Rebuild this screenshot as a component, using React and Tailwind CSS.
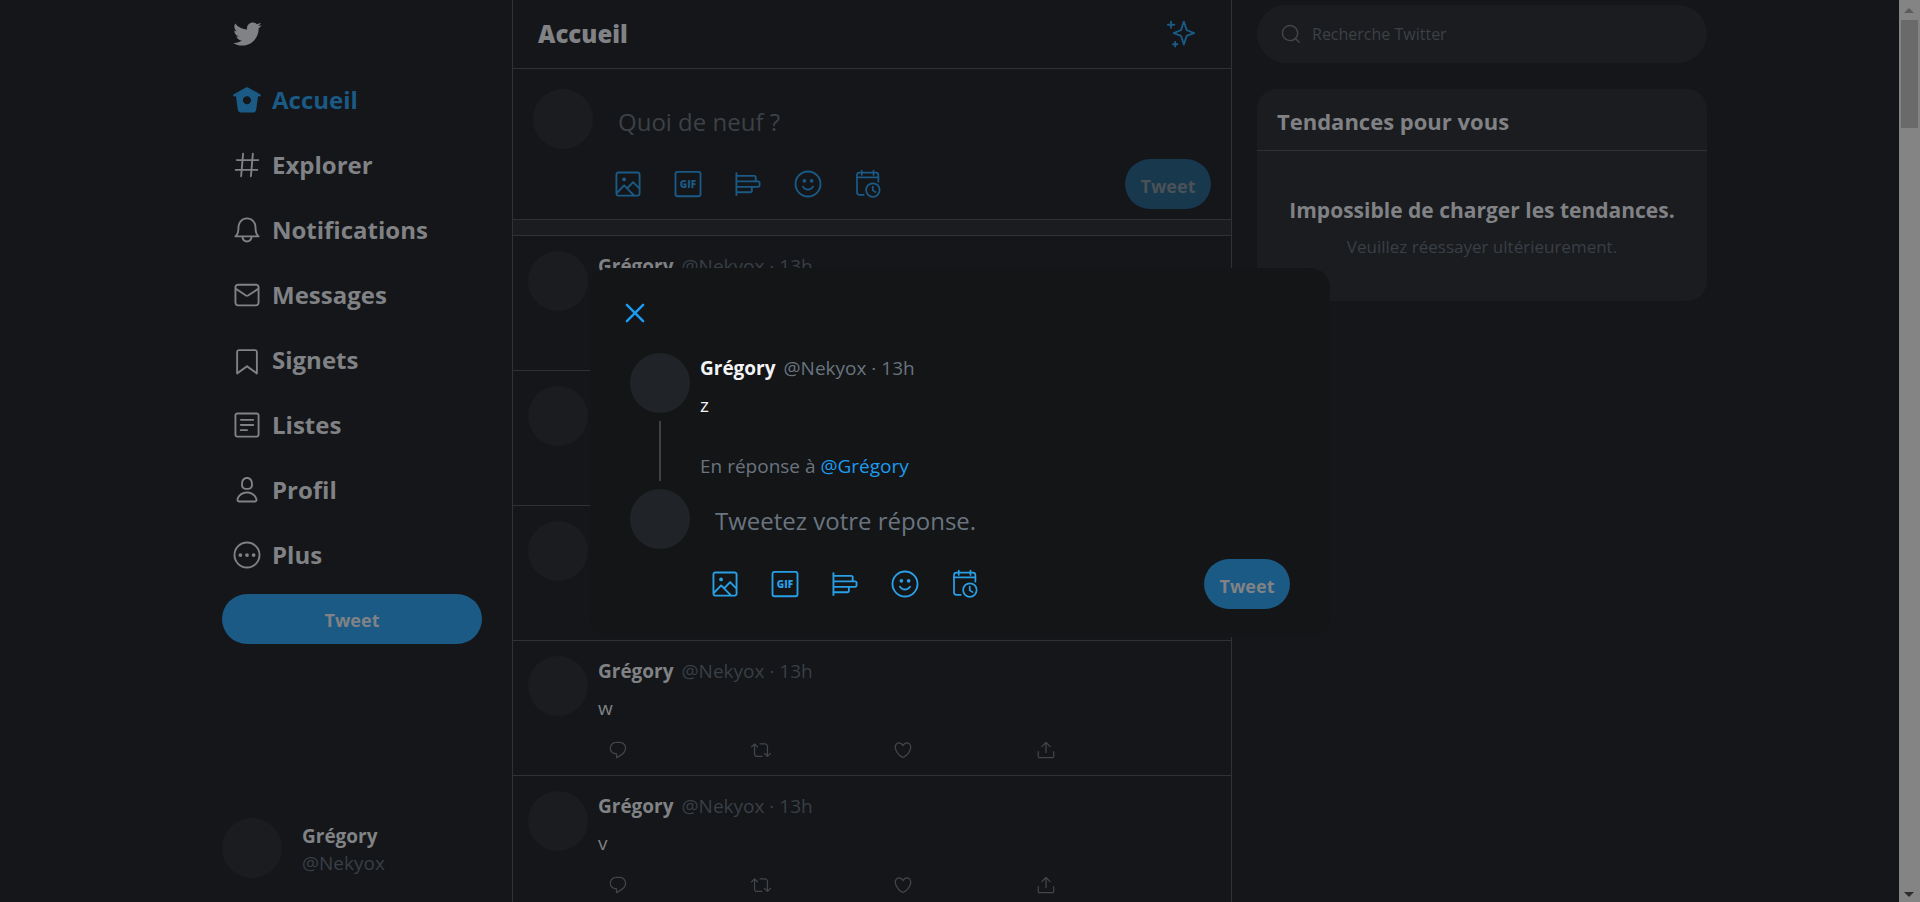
const PATHS = {
  bird: 'M23.643 4.937c-.835.37-1.732.62-2.675.733.962-.576 1.7-1.49 2.048-2.578-.9.534-1.897.922-2.958 1.13-.85-.904-2.06-1.47-3.4-1.47-2.572 0-4.658 2.086-4.658 4.66 0 .364.042.718.12 1.06-3.873-.195-7.304-2.05-9.602-4.868-.4.69-.63 1.49-.63 2.342 0 1.616.823 3.043 2.072 3.878-.764-.025-1.482-.234-2.11-.583v.06c0 2.257 1.605 4.14 3.737 4.568-.392.106-.803.162-1.227.162-.3 0-.593-.028-.877-.082.593 1.85 2.313 3.198 4.352 3.234-1.595 1.25-3.604 1.995-5.786 1.995-.376 0-.747-.022-1.112-.065 2.062 1.323 4.51 2.093 7.14 2.093 8.57 0 13.255-7.098 13.255-13.254 0-.2-.005-.402-.014-.602.91-.658 1.7-1.477 2.323-2.41z',
  home: 'M22.58 7.35L12.475 1.897c-.297-.16-.654-.16-.95 0L1.425 7.35c-.486.264-.667.87-.405 1.356.18.335.525.525.88.525.16 0 .324-.038.475-.12l.734-.396 1.59 11.25c.216 1.214 1.31 2.062 2.66 2.062h9.282c1.35 0 2.444-.848 2.662-2.088l1.588-11.225.737.398c.485.263 1.092.082 1.354-.404.263-.486.08-1.093-.404-1.355zM12 15.435c-1.795 0-3.25-1.455-3.25-3.25s1.455-3.25 3.25-3.25 3.25 1.455 3.25 3.25-1.455 3.25-3.25 3.25z',
  hash: 'M21 7.337h-3.93l.372-4.272c.036-.412-.27-.775-.682-.812-.417-.03-.776.27-.812.683l-.383 4.4h-6.32l.37-4.27c.037-.413-.27-.776-.68-.813-.42-.03-.777.27-.813.683l-.382 4.4H3.782c-.414 0-.75.337-.75.75s.336.75.75.75H7.61l-.55 6.327H3c-.414 0-.75.336-.75.75s.336.75.75.75h3.93l-.372 4.272c-.036.412.27.775.682.812l.066.003c.385 0 .712-.295.746-.686l.383-4.4h6.32l-.37 4.27c-.036.413.27.776.682.813l.066.003c.385 0 .712-.295.746-.686l.382-4.4h3.957c.413 0 .75-.337.75-.75s-.337-.75-.75-.75H16.39l.55-6.327H21c.414 0 .75-.336.75-.75s-.336-.75-.75-.75zm-6.115 7.826h-6.32l.55-6.326h6.32l-.55 6.326z',
  bell: 'M21.697 16.468c-.02-.016-2.14-1.64-2.103-6.03.02-2.532-.812-4.782-2.347-6.335C15.872 2.71 14.01 1.94 12.005 1.93h-.013c-2.004.01-3.866.78-5.242 2.174-1.534 1.553-2.368 3.802-2.346 6.334.037 4.33-2.02 5.967-2.102 6.03-.26.193-.366.53-.265.838.102.308.39.515.712.515h4.92c.102 2.31 1.997 4.16 4.33 4.16s4.226-1.85 4.327-4.16h4.922c.322 0 .61-.206.71-.514.103-.307-.003-.645-.263-.838zM12 20.478c-1.505 0-2.73-1.177-2.828-2.658h5.656c-.1 1.48-1.323 2.66-2.828 2.66zM4.38 16.32c.74-1.132 1.548-3.028 1.524-5.896-.018-2.16.644-3.982 1.913-5.267C8.91 4.05 10.397 3.437 12 3.43c1.603.008 3.087.62 4.18 1.728 1.27 1.285 1.933 3.106 1.915 5.267-.024 2.868.785 4.765 1.525 5.896H4.38z',
  mail: 'M19.25 3.018H4.75C3.233 3.018 2 4.252 2 5.77v12.495c0 1.518 1.233 2.753 2.75 2.753h14.5c1.517 0 2.75-1.235 2.75-2.753V5.77c0-1.518-1.233-2.752-2.75-2.752zm-14.5 1.5h14.5c.69 0 1.25.56 1.25 1.25v.714l-8.05 5.367c-.273.18-.626.182-.9-.002L3.5 6.482v-.714c0-.69.56-1.25 1.25-1.25zm14.5 14.998H4.75c-.69 0-1.25-.56-1.25-1.25V8.24l7.24 4.83c.383.256.822.384 1.26.384.44 0 .877-.128 1.26-.383l7.24-4.83v10.022c0 .69-.56 1.25-1.25 1.25z',
  bookmark: 'M19.9 23.5c-.157 0-.312-.05-.442-.144L12 17.928l-7.458 5.43c-.228.164-.53.19-.782.06-.25-.127-.41-.385-.41-.667V5.6c0-1.24 1.01-2.25 2.25-2.25h12.798c1.24 0 2.25 1.01 2.25 2.25v17.15c0 .282-.158.54-.41.668-.106.055-.223.082-.34.082zM12 16.25c.155 0 .31.048.44.144l6.71 4.883V5.6c0-.412-.337-.75-.75-.75H5.6c-.413 0-.75.338-.75.75v15.677l6.71-4.883c.13-.096.285-.144.44-.144z',
  list: 'M19.75 22H4.25C3.01 22 2 20.99 2 19.75V4.25C2 3.01 3.01 2 4.25 2h15.5C20.99 2 22 3.01 22 4.25v15.5c0 1.24-1.01 2.25-2.25 2.25zM4.25 3.5c-.414 0-.75.337-.75.75v15.5c0 .413.336.75.75.75h15.5c.414 0 .75-.337.75-.75V4.25c0-.413-.336-.75-.75-.75H4.25zM17 8.64H7c-.414 0-.75-.337-.75-.75s.336-.75.75-.75h10c.414 0 .75.335.75.75s-.336.75-.75.75zm0 4.11H7c-.414 0-.75-.336-.75-.75s.336-.75.75-.75h10c.414 0 .75.336.75.75s-.336.75-.75.75zm-5 4.11H7c-.414 0-.75-.335-.75-.75s.336-.75.75-.75h5c.414 0 .75.337.75.75s-.336.75-.75.75z',
  profile: 'M12 11.816c1.355 0 2.872-.15 3.84-1.256.814-.93 1.078-2.368.806-4.392-.38-2.825-2.117-4.512-4.646-4.512S7.734 3.343 7.354 6.17c-.272 2.022-.008 3.46.806 4.39.968 1.107 2.485 1.256 3.84 1.256zM8.84 6.368c.162-1.2.787-3.212 3.16-3.212s2.998 2.013 3.16 3.212c.207 1.55.057 2.627-.45 3.205-.455.52-1.266.743-2.71.743s-2.255-.223-2.71-.743c-.507-.578-.657-1.656-.45-3.205zm11.44 12.868c-.877-3.526-4.282-5.99-8.28-5.99s-7.403 2.464-8.28 5.99c-.172.692-.028 1.4.395 1.94.408.52 1.04.82 1.733.82h12.304c.693 0 1.325-.3 1.733-.82.424-.54.567-1.247.394-1.94zm-1.576 1.016c-.126.16-.316.246-.552.246H5.848c-.235 0-.426-.085-.552-.246-.137-.174-.18-.412-.12-.654.71-2.855 3.517-4.85 6.824-4.85s6.114 1.994 6.824 4.85c.06.242.017.48-.12.654z',
  reply: 'M14.046 2.242l-4.148-.01h-.002c-4.374 0-7.8 3.427-7.8 7.802 0 4.098 3.186 7.206 7.465 7.37v3.828c0 .108.044.286.12.403.142.225.384.347.632.347.138 0 .277-.038.402-.118.264-.168 6.473-4.14 8.088-5.506 1.902-1.61 3.04-3.97 3.043-6.312v-.017c-.006-4.367-3.43-7.787-7.8-7.788zm3.787 12.972c-1.134.96-4.862 3.405-6.772 4.643V16.67c0-.414-.335-.75-.75-.75h-.396c-3.66 0-6.318-2.476-6.318-5.886 0-3.534 2.768-6.302 6.3-6.302l4.147.01h.002c3.532 0 6.3 2.766 6.302 6.296-.003 1.91-.942 3.844-2.514 5.176z',
  retweet: 'M23.77 15.67c-.292-.293-.767-.293-1.06 0l-2.22 2.22V7.65c0-2.068-1.683-3.75-3.75-3.75h-5.85c-.414 0-.75.336-.75.75s.336.75.75.75h5.85c1.24 0 2.25 1.01 2.25 2.25v10.24l-2.22-2.22c-.293-.293-.768-.293-1.06 0s-.294.768 0 1.06l3.5 3.5c.145.147.337.22.53.22s.383-.072.53-.22l3.5-3.5c.294-.292.294-.767 0-1.06zm-10.66 3.28H7.26c-1.24 0-2.25-1.01-2.25-2.25V6.46l2.22 2.22c.148.147.34.22.532.22s.384-.073.53-.22c.293-.293.293-.768 0-1.06l-3.5-3.5c-.293-.294-.768-.294-1.06 0l-3.5 3.5c-.294.292-.294.767 0 1.06s.767.293 1.06 0l2.22-2.22V16.7c0 2.068 1.683 3.75 3.75 3.75h5.85c.414 0 .75-.336.75-.75s-.337-.75-.75-.75z',
  like: 'M12 21.638h-.014C9.403 21.59 1.95 14.856 1.95 8.478c0-3.064 2.525-5.754 5.403-5.754 2.29 0 3.83 1.58 4.646 2.73.814-1.148 2.354-2.73 4.645-2.73 2.88 0 5.404 2.69 5.404 5.755 0 6.376-7.454 13.11-10.037 13.157H12zM7.354 4.225c-2.08 0-3.903 1.988-3.903 4.255 0 5.74 7.034 11.596 8.55 11.658 1.518-.062 8.55-5.917 8.55-11.658 0-2.267-1.823-4.255-3.903-4.255-2.528 0-3.94 2.936-3.952 2.965-.23.562-1.156.562-1.387 0-.014-.03-1.425-2.965-3.954-2.965z',
  share: 'M17.53 7.47l-5-5c-.293-.293-.768-.293-1.06 0l-5 5c-.294.293-.294.768 0 1.06s.767.294 1.06 0l3.72-3.72V15c0 .414.336.75.75.75s.75-.336.75-.75V4.81l3.72 3.72c.146.147.338.22.53.22s.384-.072.53-.22c.293-.293.293-.767 0-1.06zM19.708 21.944H4.292C3.028 21.944 2 20.916 2 19.652V14c0-.414.336-.75.75-.75s.75.336.75.75v5.652c0 .437.355.792.792.792h15.416c.437 0 .792-.355.792-.792V14c0-.414.336-.75.75-.75s.75.336.75.75v5.652c0 1.264-1.028 2.292-2.292 2.292z',
  sparkle: 'M22.772 10.506l-5.618-2.192-2.16-6.5c-.102-.307-.39-.514-.712-.514s-.61.207-.712.513l-2.16 6.5-5.62 2.192c-.287.112-.477.39-.477.7s.19.585.478.698l5.62 2.192 2.16 6.5c.102.306.39.513.712.513s.61-.207.712-.513l2.16-6.5 5.62-2.192c.287-.112.477-.39.477-.7s-.19-.585-.478-.697zm-6.49 2.32c-.208.08-.37.25-.44.46l-1.56 4.695-1.56-4.693c-.07-.21-.23-.38-.438-.462l-4.155-1.62 4.154-1.622c.208-.08.37-.25.44-.462l1.56-4.693 1.56 4.694c.07.212.23.382.438.463l4.155 1.62-4.155 1.622zM6.663 3.812h-1.88V2.05c0-.414-.337-.75-.75-.75s-.75.336-.75.75v1.762H1.5c-.414 0-.75.336-.75.75s.336.75.75.75h1.782v1.762c0 .414.336.75.75.75s.75-.336.75-.75V5.312h1.88c.415 0 .75-.336.75-.75s-.335-.75-.75-.75zm2.535 15.622h-1.1v-1.016c0-.414-.335-.75-.75-.75s-.75.336-.75.75v1.016H5.57c-.414 0-.75.336-.75.75s.336.75.75.75H6.6v1.016c0 .414.335.75.75.75s.75-.336.75-.75v-1.016h1.098c.414 0 .75-.336.75-.75s-.336-.75-.75-.75z',
  image: 'M19.75 2H4.25C3.01 2 2 3.01 2 4.25v15.5C2 20.99 3.01 22 4.25 22h15.5c1.24 0 2.25-1.01 2.25-2.25V4.25C22 3.01 20.99 2 19.75 2zM4.25 3.5h15.5c.413 0 .75.337.75.75v9.676l-3.858-3.858c-.14-.14-.33-.22-.53-.22h-.003c-.2 0-.393.08-.532.224l-4.317 4.384-1.813-1.806c-.14-.14-.33-.22-.53-.22-.193-.03-.395.08-.535.227L3.5 17.642V4.25c0-.413.337-.75.75-.75zm-.744 16.28l5.418-5.534 6.282 6.254H4.25c-.402 0-.727-.322-.744-.72zm16.244.72h-2.42l-5.007-4.987 3.792-3.85 4.385 4.384v3.703c0 .413-.337.75-.75.75z',
  poll: 'M20.222 9.16h-1.334c.015-.09.028-.182.028-.277V6.57c0-.98-.797-1.777-1.778-1.777H3.5V3.358c0-.414-.336-.75-.75-.75s-.75.336-.75.75V20.83c0 .415.336.75.75.75s.75-.335.75-.75v-1.434h10.556c.98 0 1.778-.797 1.778-1.777v-2.313c0-.095-.014-.187-.028-.278h4.417c.98 0 1.778-.798 1.778-1.778v-2.31c0-.983-.797-1.78-1.778-1.78zM17.14 6.293c.152 0 .277.124.277.277v2.31c0 .154-.125.28-.278.28H3.5V6.29h13.64zm-2.807 9.014v2.312c0 .153-.125.277-.278.277H3.5v-2.868h10.556c.153 0 .277.126.277.28zM20.5 13.25c0 .153-.125.277-.278.277H3.5V10.66h16.722c.153 0 .278.124.278.277v2.313z',
  search: 'M21.53 20.47l-3.66-3.66C19.195 15.24 20 13.214 20 11c0-4.97-4.03-9-9-9s-9 4.03-9 9 4.03 9 9 9c2.215 0 4.24-.804 5.808-2.13l3.66 3.66c.147.146.34.22.53.22s.385-.073.53-.22c.295-.293.295-.767.002-1.06zM3.5 11c0-4.135 3.365-7.5 7.5-7.5s7.5 3.365 7.5 7.5-3.365 7.5-7.5 7.5-7.5-3.365-7.5-7.5z',
  close: 'M13.414 12l5.793-5.793c.39-.39.39-1.023 0-1.414s-1.023-.39-1.414 0L12 10.586 6.207 4.793c-.39-.39-1.023-.39-1.414 0s-.39 1.023 0 1.414L10.586 12l-5.793 5.793c-.39.39-.39 1.023 0 1.414.195.195.45.293.707.293s.512-.098.707-.293L12 13.414l5.793 5.793c.195.195.45.293.707.293s.512-.098.707-.293c.39-.39.39-1.023 0-1.414L13.414 12z',
};

const EXTRAS = {
  image: <circle cx="8.868" cy="8.309" r="1.542" />,
  more: (
    <>
      <circle cx="12" cy="12" r="10" fill="none" stroke="currentColor" strokeWidth="1.5" />
      <circle cx="6.7" cy="12" r="1.5" />
      <circle cx="12" cy="12" r="1.5" />
      <circle cx="17.3" cy="12" r="1.5" />
    </>
  ),
  gif: (
    <>
      <rect x="2" y="2.25" width="20" height="19.5" rx="1.6" fill="none" stroke="currentColor" strokeWidth="1.5" />
      <text x="12" y="14.9" textAnchor="middle" fontSize="8" fontWeight="800" fontFamily="Open Sans, sans-serif">
        GIF
      </text>
    </>
  ),
  emoji: (
    <>
      <circle cx="12" cy="12" r="10" fill="none" stroke="currentColor" strokeWidth="1.5" />
      <path d="M12 17.115c-1.892 0-3.633-.95-4.656-2.544-.224-.348-.123-.81.226-1.035.348-.226.812-.124 1.036.226.747 1.162 2.016 1.855 3.395 1.855s2.648-.693 3.396-1.854c.224-.35.688-.45 1.036-.225.35.224.45.688.226 1.036-1.025 1.594-2.766 2.545-4.658 2.545z" />
      <circle cx="14.9" cy="9.458" r="1.478" />
      <circle cx="9.1" cy="9.458" r="1.478" />
    </>
  ),
  schedule: (
    <g fill="none" stroke="currentColor" strokeWidth="1.4" strokeLinecap="round" strokeLinejoin="round">
      <path d="M8.6 20.6H5.2c-1.1 0-2-.9-2-2V4.9c0-1.1.9-2 2-2h13.1c1.1 0 2 .9 2 2v5.2" />
      <path d="M3.2 6.7h17.1M7 1.3v3.4M16.4 1.3v3.4" />
      <circle cx="15.9" cy="16.8" r="5.4" />
      <path d="M15.8 14v3.1l2.3 1.4" />
    </g>
  ),
};

function Icon({ name, className = 'size-[30px]' }) {
  return (
    <svg viewBox="0 0 24 24" fill="currentColor" aria-hidden="true" className={`block shrink-0 ${className}`}>
      {PATHS[name] && <path d={PATHS[name]} />}
      {EXTRAS[name]}
    </svg>
  );
}

const NAV = [
  ['home', 'Accueil'],
  ['hash', 'Explorer'],
  ['bell', 'Notifications'],
  ['mail', 'Messages'],
  ['bookmark', 'Signets'],
  ['list', 'Listes'],
  ['profile', 'Profil'],
  ['more', 'Plus'],
];

const TOOLS = [
  ['image', 'Image'],
  ['gif', 'GIF'],
  ['poll', 'Sondage'],
  ['emoji', 'Emoji'],
  ['schedule', 'Programmer'],
];

const ACTIONS = [
  ['reply', 'Répondre'],
  ['retweet', 'Retweeter'],
  ['like', "J'aime"],
  ['share', 'Partager'],
];

const TWEETS = ['z', 'y', 'x', 'w', 'v'];

function Toolbar({ iconColor, buttonStyle }) {
  return (
    <div className="mt-1.5 flex items-center justify-between">
      <div className={`flex gap-[30px] ${iconColor}`}>
        {TOOLS.map(([icon, label]) => (
          <button key={icon} type="button" aria-label={label}>
            <Icon name={icon} />
          </button>
        ))}
      </div>
      <button type="button" className={`h-[50px] w-[86px] rounded-full pt-1 text-lg font-bold ${buttonStyle}`}>
        Tweet
      </button>
    </div>
  );
}

function Sidebar() {
  return (
    <header className="flex w-80 shrink-0 flex-col px-[30px] pb-6">
      <a href="#accueil" aria-label="Twitter" className="flex h-[67px] items-center pl-2.5 text-[#808285]">
        <Icon name="bird" />
      </a>
      <nav className="flex flex-col">
        {NAV.map(([icon, label], i) => (
          <a
            key={label}
            href={`#${label.toLowerCase()}`}
            className={`flex h-[65px] items-center gap-2.5 pl-2.5 text-2xl font-bold ${
              i === 0 ? 'text-[#1a5a85]' : 'text-[#808285]'
            }`}
          >
            <Icon name={icon} />
            {label}
          </a>
        ))}
      </nav>
      <button
        type="button"
        className="mt-[7px] h-[50px] rounded-full bg-[#1a5a85] pt-0.5 text-lg font-bold text-[#808285]"
      >
        Tweet
      </button>
      <div className="mt-auto flex items-center gap-5">
        <div className="size-[60px] rounded-full bg-[#1b1c1f]" />
        <div className="pt-1 text-[19px] leading-[27px]">
          <p className="font-bold text-[#808285]">Grégory</p>
          <p className="text-[#393f46]">@Nekyox</p>
        </div>
      </div>
    </header>
  );
}

function Tweet({ text }) {
  return (
    <article className="flex h-[135px] shrink-0 gap-2.5 border-b border-[#2f3134] pt-[15px] pl-[15px]">
      <div className="size-[60px] shrink-0 rounded-full bg-[#1b1c1f]" />
      <div className="flex-1 text-[19px] leading-[30px]">
        <p className="text-[#393f46]">
          <span className="mr-2 font-bold text-[#808285]">Grégory</span>
          @Nekyox · 13h
        </p>
        <p className="mt-[7px] text-[#808285]">{text}</p>
        <div className="mt-[17px] flex max-w-[468px] justify-between px-2.5 text-[#42464a]">
          {ACTIONS.map(([icon, label]) => (
            <button key={icon} type="button" aria-label={label}>
              <Icon name={icon} className="size-5" />
            </button>
          ))}
        </div>
      </div>
    </article>
  );
}

function Feed() {
  return (
    <main className="flex min-w-0 flex-1 flex-col border-x border-[#2f3134]">
      <div className="flex h-[69px] shrink-0 items-center justify-between border-b border-[#2f3134] pr-[35px] pl-[25px]">
        <h1 className="text-2xl font-extrabold text-[#808285]">Accueil</h1>
        <button type="button" aria-label="Meilleurs tweets" className="text-[#1a5a85]">
          <Icon name="sparkle" />
        </button>
      </div>
      <div className="flex gap-5 border-b border-[#2f3134] px-5 pt-5 pb-2.5">
        <div className="size-[60px] shrink-0 rounded-full bg-[#1b1c1f]" />
        <div className="min-w-0 flex-1">
          <input
            type="text"
            aria-label="Quoi de neuf ?"
            placeholder="Quoi de neuf ?"
            className="block h-16 w-full bg-transparent pl-[5px] text-2xl outline-none placeholder:text-[#3c4147]"
          />
          <Toolbar iconColor="text-[#1a5a85]" buttonStyle="bg-[#17384d] text-[#4b5257]" />
        </div>
      </div>
      <div className="h-4 shrink-0 border-b border-[#2f3134] bg-[#1b1c1f]" />
      {TWEETS.map((text) => (
        <Tweet key={text} text={text} />
      ))}
    </main>
  );
}

function Trends() {
  return (
    <aside className="w-[475px] shrink-0 pt-[5px] pl-[25px]">
      <label className="flex h-[58px] items-center gap-2.5 rounded-full bg-[#1b1c1f] px-[23px] text-[#42464a]">
        <Icon name="search" className="size-[22px]" />
        <input
          type="search"
          aria-label="Recherche Twitter"
          placeholder="Recherche Twitter"
          className="min-w-0 flex-1 bg-transparent text-base outline-none placeholder:text-[#3c4147]"
        />
      </label>
      <section className="mt-[26px] rounded-[20px] bg-[#1b1c1f]">
        <h2 className="border-b border-[#2f3134] px-5 pt-[18px] pb-3.5 text-[22px] leading-[29px] font-bold text-[#808285]">
          Tendances pour vous
        </h2>
        <div className="px-5 pt-11 pb-10 text-center">
          <p className="text-[21px] leading-[30px] font-bold text-[#808285]">Impossible de charger les tendances.</p>
          <p className="mt-2 text-[17px] leading-[28px] text-[#393f46]">Veuillez réessayer ultérieurement.</p>
        </div>
      </section>
    </aside>
  );
}

function Scrollbar() {
  return (
    <div aria-hidden="true" className="flex w-[21px] shrink-0 flex-col items-center bg-[#848484] text-[#5c5c5c]">
      <svg viewBox="0 0 21 20" className="h-5 w-[21px] shrink-0">
        <path d="M10 8l5 5H5z" fill="currentColor" />
      </svg>
      <div className="h-[108px] w-[17px] bg-[#6a6a6a]" />
      <svg viewBox="0 0 21 20" className="mt-auto h-5 w-[21px] shrink-0 text-[#2c2c2c]">
        <path d="M10 15l5-5H5z" fill="currentColor" />
      </svg>
    </div>
  );
}

function ReplyDialog() {
  return (
    <div className="fixed inset-0 flex items-center justify-center pt-0.5">
      <div
        role="dialog"
        aria-modal="true"
        aria-label="Répondre"
        className="w-[740px] rounded-[20px] bg-[#131516] px-[30px] pt-[30px] pb-7"
      >
        <button type="button" aria-label="Fermer" className="block text-[#1d9bf0]">
          <Icon name="close" />
        </button>
        <div className="mt-[25px] flex gap-2.5 px-2.5">
          <div className="flex shrink-0 flex-col items-center gap-2">
            <div className="size-[60px] rounded-full bg-[#202327]" />
            <div className="h-[60px] w-0.5 bg-[#3d4246]" />
            <div className="size-[60px] rounded-full bg-[#202327]" />
          </div>
          <div className="min-w-0 flex-1 text-[19px] leading-[30px]">
            <p className="text-[#6a7480]">
              <span className="mr-2 font-bold text-[#f2f4f5]">Grégory</span>
              @Nekyox · 13h
            </p>
            <p className="mt-[7px] text-[#f2f4f5]">z</p>
            <p className="mt-[31px] mb-2 text-[#6a7480]">
              En réponse à{' '}
              <a href="#gregory" className="text-[#1d9bf0]">
                @Grégory
              </a>
            </p>
            <div className="pl-2.5">
              <input
                type="text"
                aria-label="Tweetez votre réponse."
                placeholder="Tweetez votre réponse."
                className="block h-16 w-full bg-transparent pl-[5px] text-2xl outline-none placeholder:text-[#6a7480]"
              />
              <Toolbar iconColor="text-[#2a9fe6]" buttonStyle="bg-[#1a5a85] text-[#808285]" />
            </div>
          </div>
        </div>
      </div>
    </div>
  );
}

export default function App() {
  return (
    <div className="flex h-screen overflow-hidden bg-[#141619] font-['Open_Sans',sans-serif]">
      <div className="mx-auto flex w-full max-w-[1515px]">
        <Sidebar />
        <Feed />
        <Trends />
      </div>
      <Scrollbar />
      <ReplyDialog />
    </div>
  );
}
